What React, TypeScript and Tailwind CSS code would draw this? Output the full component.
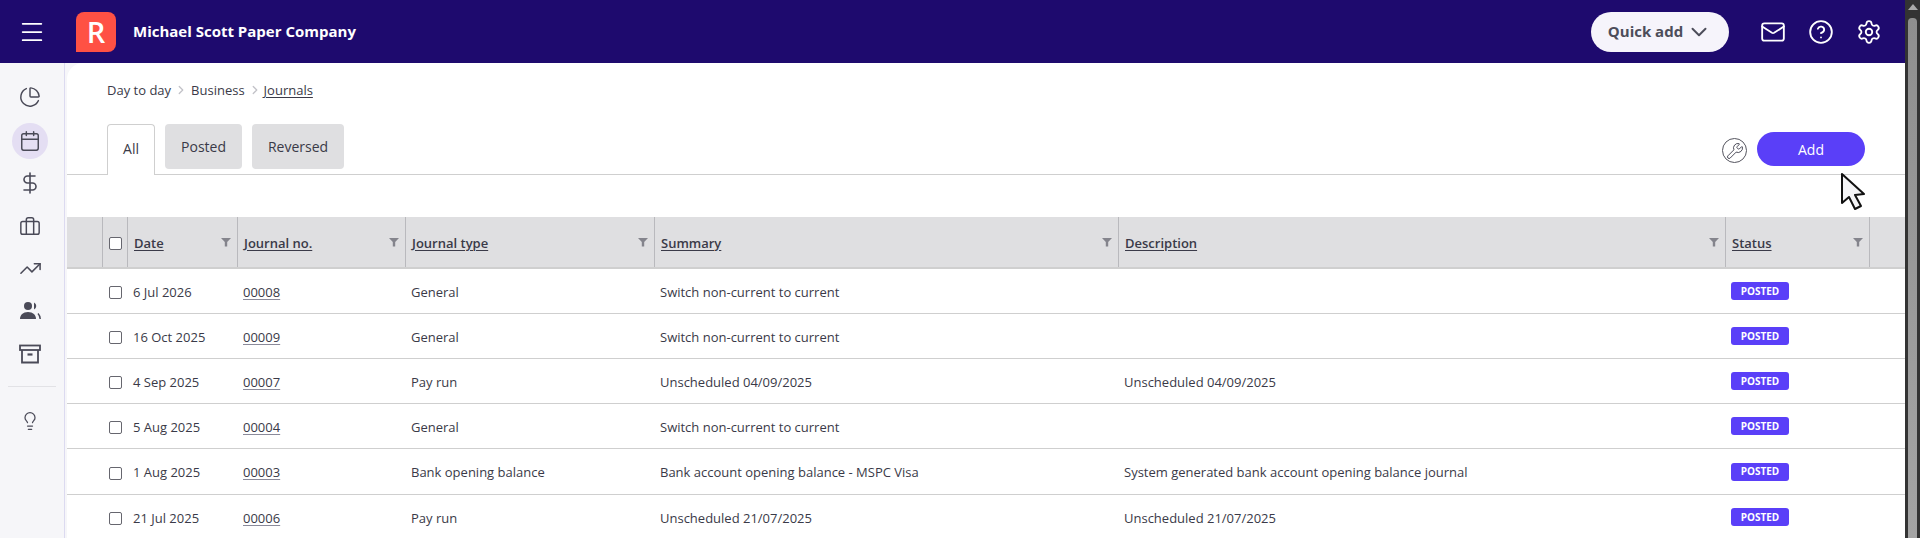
import { Briefcase, Calendar, ChevronDown, ChevronRight, CircleHelp, DollarSign, Lightbulb, Mail, Menu, PieChart, Settings, TrendingUp, Wrench } from "lucide-react";

const rows = [
  { date: "6 Jul 2026", no: "00008", type: "General", summary: "Switch non-current to current", description: "" },
  { date: "16 Oct 2025", no: "00009", type: "General", summary: "Switch non-current to current", description: "" },
  { date: "4 Sep 2025", no: "00007", type: "Pay run", summary: "Unscheduled 04/09/2025", description: "Unscheduled 04/09/2025" },
  { date: "5 Aug 2025", no: "00004", type: "General", summary: "Switch non-current to current", description: "" },
  { date: "1 Aug 2025", no: "00003", type: "Bank opening balance", summary: "Bank account opening balance - MSPC Visa", description: "System generated bank account opening balance journal" },
  { date: "21 Jul 2025", no: "00006", type: "Pay run", summary: "Unscheduled 21/07/2025", description: "Unscheduled 21/07/2025" },
];

const columns = ["Date", "Journal no.", "Journal type", "Summary", "Description", "Status"];

const gridCols = "grid grid-cols-[36px_25px_110px_168px_249px_464px_607px_144px_35px]";

const FilterIcon = () => (
  <svg viewBox="0 0 10 10" className="mb-[3px] h-[10px] w-[10px] shrink-0 fill-[#84848c]">
    <path d="M0 1h10L6.2 5v4.5H3.8V5z" />
  </svg>
);

const UsersIcon = () => (
  <svg viewBox="0 0 24 24" className="h-6 w-6" fill="#4a4a58">
    <circle cx="10" cy="7" r="4" />
    <path d="M2 20c0-4 3-7 8-7s8 3 8 7z" />
    <path d="M16 3.4a4 4 0 0 1 0 7.2z" />
    <path d="M20 14.5c1.3 1.3 2 3.3 2.2 5.5" fill="none" stroke="#4a4a58" strokeWidth="1.5" />
  </svg>
);

const ArchiveIcon = () => (
  <svg viewBox="0 0 24 24" className="h-6 w-6" fill="none" stroke="#4a4a58" strokeWidth="1.8">
    <rect x="2" y="3.5" width="20" height="4.5" />
    <path d="M4 8v12.5h16V8" />
    <path d="M9.5 12.5h5" strokeWidth="2.2" />
  </svg>
);

const App = () => {
  return (
    <div className="flex h-[538px] w-[1920px] overflow-hidden bg-white font-['Open_Sans',sans-serif] text-[13px] text-[#3a3a48]">
      <div className="relative flex min-w-0 flex-1 flex-col">
        <header className="flex h-[63px] shrink-0 items-center bg-[#1e0a6e] text-white">
          <Menu size={28} strokeWidth={1.5} className="ml-[18px]" />
          <div className="ml-[30px] flex h-10 w-10 items-center justify-center rounded-tl-lg rounded-tr-lg rounded-br-lg bg-[#ff5144] text-[29px] font-semibold">R</div>
          <span className="ml-[17px] text-[15px] font-bold">Michael Scott Paper Company</span>
          <button className="ml-auto flex h-10 w-[138px] items-center justify-center gap-[3px] rounded-full bg-[#f6f4fb] text-[15px] font-bold text-[#4d4d5a]">
            Quick add
            <ChevronDown size={26} strokeWidth={1.8} />
          </button>
          <Mail size={26} strokeWidth={1.7} className="ml-[31px]" />
          <CircleHelp size={26} strokeWidth={1.7} className="ml-[22px]" />
          <Settings size={26} strokeWidth={1.7} className="mr-[23px] ml-[22px]" />
        </header>

        <div className="flex min-h-0 flex-1 bg-[#f6f6f9]">
          <aside className="flex w-[65px] shrink-0 flex-col items-start border-r border-[#dcdaf0] pt-4 pl-3 text-[#4a4a58]">
            <div className="flex h-9 w-9 items-center justify-center"><PieChart size={22} strokeWidth={1.6} /></div>
            <div className="mt-[8px] flex h-9 w-9 items-center justify-center rounded-full bg-[#e4def3]"><Calendar size={22} strokeWidth={1.6} /></div>
            <div className="mt-[6px] flex h-9 w-9 items-center justify-center"><DollarSign size={24} strokeWidth={1.6} /></div>
            <div className="mt-[8px] flex h-9 w-9 items-center justify-center"><Briefcase size={22} strokeWidth={1.6} /></div>
            <div className="mt-[5px] flex h-9 w-9 items-center justify-center"><TrendingUp size={23} strokeWidth={1.6} /></div>
            <div className="mt-[7px] flex h-9 w-9 items-center justify-center"><UsersIcon /></div>
            <div className="mt-[7px] flex h-9 w-9 items-center justify-center"><ArchiveIcon /></div>
            <div className="mt-[14px] -ml-1 h-px w-12 bg-[#e2e2e6]" />
            <div className="mt-4 flex h-9 w-9 items-center justify-center"><Lightbulb size={20} strokeWidth={1.5} /></div>
          </aside>

          <main className="ml-[2px] min-w-0 flex-1 rounded-tl-2xl bg-white">
            <nav className="flex h-[61px] items-end gap-[3px] pb-6 pl-10 text-[13px]">
              <span>Day to day</span>
              <ChevronRight size={14} strokeWidth={2.2} className="mb-[3px] text-[#c2c2c8]" />
              <span>Business</span>
              <ChevronRight size={14} strokeWidth={2.2} className="mb-[3px] text-[#c2c2c8]" />
              <span className="-ml-px underline decoration-1 underline-offset-2">Journals</span>
            </nav>

            <div className="flex h-[51px] items-start border-b border-[#cfcfcf] pl-10">
              <div className="h-[51px] w-[48px] rounded-t border border-b-0 border-[#cfcfcf] bg-white pt-[13px] text-center text-[14px]">All</div>
              <div className="ml-[10px] h-[45px] w-[77px] rounded bg-[#dfdfe1] pt-[12px] text-center text-[14px]">Posted</div>
              <div className="ml-[10px] h-[45px] w-[92px] rounded bg-[#dfdfe1] pt-[12px] text-center text-[14px]">Reversed</div>
              <div className="mt-[14px] ml-auto flex h-[25px] w-[25px] items-center justify-center rounded-full border border-[#55555f]">
                <Wrench size={18} strokeWidth={1.2} />
              </div>
              <button className="mt-2 mr-10 ml-[10px] h-[34px] w-[108px] rounded-full bg-[#5a3ff8] text-[14px] text-white">Add</button>
            </div>

            <div className="mt-[42px]">
              <div className={`${gridCols} h-[52px] border-b-2 border-[#cfcfcf] bg-[#dfdfe1]`}>
                <div className="border-r border-[#b9b9bd]" />
                <div className="flex items-center justify-center border-r border-[#b9b9bd] pt-[3px] pl-px">
                  <span className="h-[13px] w-[13px] rounded-[2px] border border-[#66666e] bg-white" />
                </div>
                {columns.map((col) => (
                  <div key={col} className="flex items-center justify-between border-r border-[#b9b9bd] pt-[3px] pr-[6px] pl-[6px] text-[13px] font-semibold">
                    <span className="underline decoration-1 underline-offset-2">{col}</span>
                    <FilterIcon />
                  </div>
                ))}
              </div>
              {rows.map((row, i) => (
                <div key={row.no} className={`${gridCols} ${i === 4 ? "h-[46px]" : "h-[45px]"} border-b border-[#cfcfcf]`}>
                  <div />
                  <div className="flex items-center justify-center pt-[3px] pr-px">
                    <span className="h-[13px] w-[13px] rounded-[2px] border border-[#66666e] bg-white" />
                  </div>
                  <div className="flex items-center pt-[3px] pl-[5px]">{row.date}</div>
                  <div className="flex items-center pt-[3px] pl-[5px]"><span className="underline decoration-[#8a8a9a] decoration-1 underline-offset-2">{row.no}</span></div>
                  <div className="flex items-center pt-[3px] pl-[5px]">{row.type}</div>
                  <div className="flex items-center pt-[3px] pl-[5px]">{row.summary}</div>
                  <div className="flex items-center pt-[3px] pl-[5px]">{row.description}</div>
                  <div className="flex items-center pl-[5px]">
                    <span className="flex h-[18px] w-[58px] items-center justify-center rounded-[3px] bg-[#5a3ff8] text-[10px] font-bold text-white">POSTED</span>
                  </div>
                  <div />
                </div>
              ))}
            </div>
          </main>
        </div>

        <svg viewBox="0 0 26 40" className="absolute top-[172px] left-[1840px] h-10 w-[26px]">
          <path d="M2 2 L2 31 L9 25 L15 37 L21 34 L15 23 L24 22 Z" fill="#f4f4f6" stroke="#111" strokeWidth="2" strokeLinejoin="round" />
        </svg>
      </div>

      <div className="flex w-[15px] shrink-0 flex-col items-center border-x-[3px] border-[#333] bg-[#333]">
        <div className="mt-[4px] h-0 w-0 border-x-[5px] border-b-[6px] border-x-transparent border-b-[#aaa]" />
        <div className="mt-[8px] h-[520px] w-[9px] rounded-t bg-gradient-to-b from-[#8f8f8f] to-[#a4a4a4]" />
      </div>
    </div>
  );
};

export default App;
